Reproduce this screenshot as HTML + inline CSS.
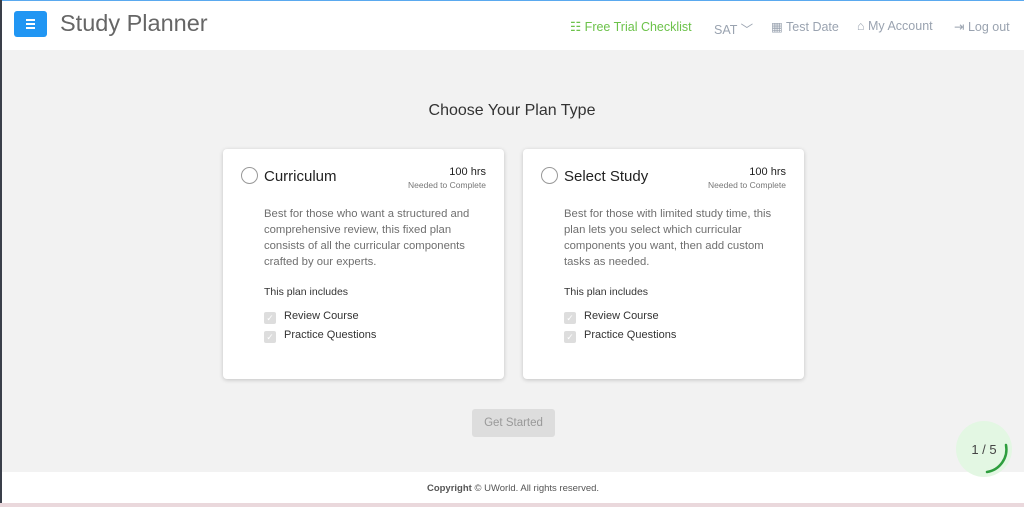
<!DOCTYPE html>
<html><head><style>
*{margin:0;padding:0;box-sizing:border-box}
body{width:1024px;height:507px;overflow:hidden;font-family:"Liberation Sans",sans-serif;background:#f2f2f2;position:relative}
.lb{position:absolute;left:0;top:0;width:2px;height:507px;background:#3a3f4a}
.tb{position:absolute;left:0;top:0;width:1024px;height:1px;background:#5aa9ef}
.hdr{position:absolute;left:2px;top:1px;width:1022px;height:49px;background:#fff}
.menu{position:absolute;left:14px;top:11px;width:33px;height:26px;background:#2196f3;border-radius:3px}
.menu i{position:absolute;left:12px;width:9px;height:2px;background:#fff}
.title{position:absolute;left:60px;top:10px;font-size:23.5px;color:#666}
.nav{position:absolute;top:19px;font-size:12.5px;color:#9aa3b0}
.card{position:absolute;top:149px;width:281px;height:230px;background:#fff;border-radius:4px;box-shadow:0 1px 4px rgba(0,0,0,.2)}
.radio{position:absolute;left:18px;top:18px;width:17px;height:17px;border:1.5px solid #999;border-radius:50%}
.ct{position:absolute;left:41px;top:19px;font-size:15px;color:#222}
.hrs{position:absolute;right:18px;top:17px;font-size:11px;color:#222;text-align:right;line-height:13px}
.hrs small{font-size:8.5px;color:#777}
.desc{position:absolute;left:41px;top:57px;width:222px;font-size:11.3px;line-height:16px;color:#6f6f6f}
.inc{position:absolute;left:41px;top:137px;font-size:10.5px;color:#333}
.chk{position:absolute;left:41px;font-size:11px;color:#333}
.chk b{display:inline-block;width:12px;height:12px;background:#ddd;border-radius:2px;margin-right:8px;vertical-align:-2px;color:#fff;font-size:9px;text-align:center;line-height:12px;font-weight:normal}
.btn{position:absolute;left:472px;top:409px;width:83px;height:28px;background:#ddd;border-radius:3px;color:#999;font-size:11.5px;text-align:center;line-height:28px}
.ftr{position:absolute;left:2px;top:472px;width:1022px;height:31px;background:#fff;text-align:center;font-size:9.5px;color:#555;line-height:33px}
.bl{position:absolute;left:0;top:503px;width:1024px;height:4px;background:#ead8dc}
</style></head><body>
<div class="tb"></div>
<div class="hdr"></div>
<div class="lb"></div>
<div class="menu"><i style="top:8px"></i><i style="top:12px"></i><i style="top:16px"></i></div>
<div class="title">Study Planner</div>
<div class="nav" style="left:570px;color:#6cc24a">☷ Free Trial Checklist</div>
<div class="nav" style="left:714px">SAT ﹀</div>
<div class="nav" style="left:771px">▦ Test Date</div>
<div class="nav" style="left:857px">⌂ My Account</div>
<div class="nav" style="left:954px">⇥ Log out</div>
<div style="position:absolute;left:0;width:1024px;top:102px;text-align:center;font-size:16px;color:#333">Choose Your Plan Type</div>
<div class="card" style="left:223px">
<div class="radio"></div><div class="ct">Curriculum</div>
<div class="hrs">100 hrs<br><small>Needed to Complete</small></div>
<div class="desc">Best for those who want a structured and comprehensive review, this fixed plan consists of all the curricular components crafted by our experts.</div>
<div class="inc">This plan includes</div>
<div class="chk" style="top:161px"><b>✓</b>Review Course</div>
<div class="chk" style="top:180px"><b>✓</b>Practice Questions</div>
</div>
<div class="card" style="left:523px">
<div class="radio"></div><div class="ct">Select Study</div>
<div class="hrs">100 hrs<br><small>Needed to Complete</small></div>
<div class="desc">Best for those with limited study time, this plan lets you select which curricular components you want, then add custom tasks as needed.</div>
<div class="inc">This plan includes</div>
<div class="chk" style="top:161px"><b>✓</b>Review Course</div>
<div class="chk" style="top:180px"><b>✓</b>Practice Questions</div>
</div>
<div class="btn">Get Started</div>
<div class="ftr"><b>Copyright</b> © UWorld. All rights reserved.</div>
<div class="bl"></div>
<svg style="position:absolute;left:955px;top:420px" width="58" height="58"><circle cx="29" cy="29" r="28" fill="#e3f7e3"/><path d="M51 25 A23 23 0 0 1 32 52" fill="none" stroke="#2e9e3e" stroke-width="2.5" stroke-linecap="round"/><text x="29" y="34" text-anchor="middle" font-family="Liberation Sans" font-size="13" fill="#444">1 / 5</text></svg>
</body></html>
